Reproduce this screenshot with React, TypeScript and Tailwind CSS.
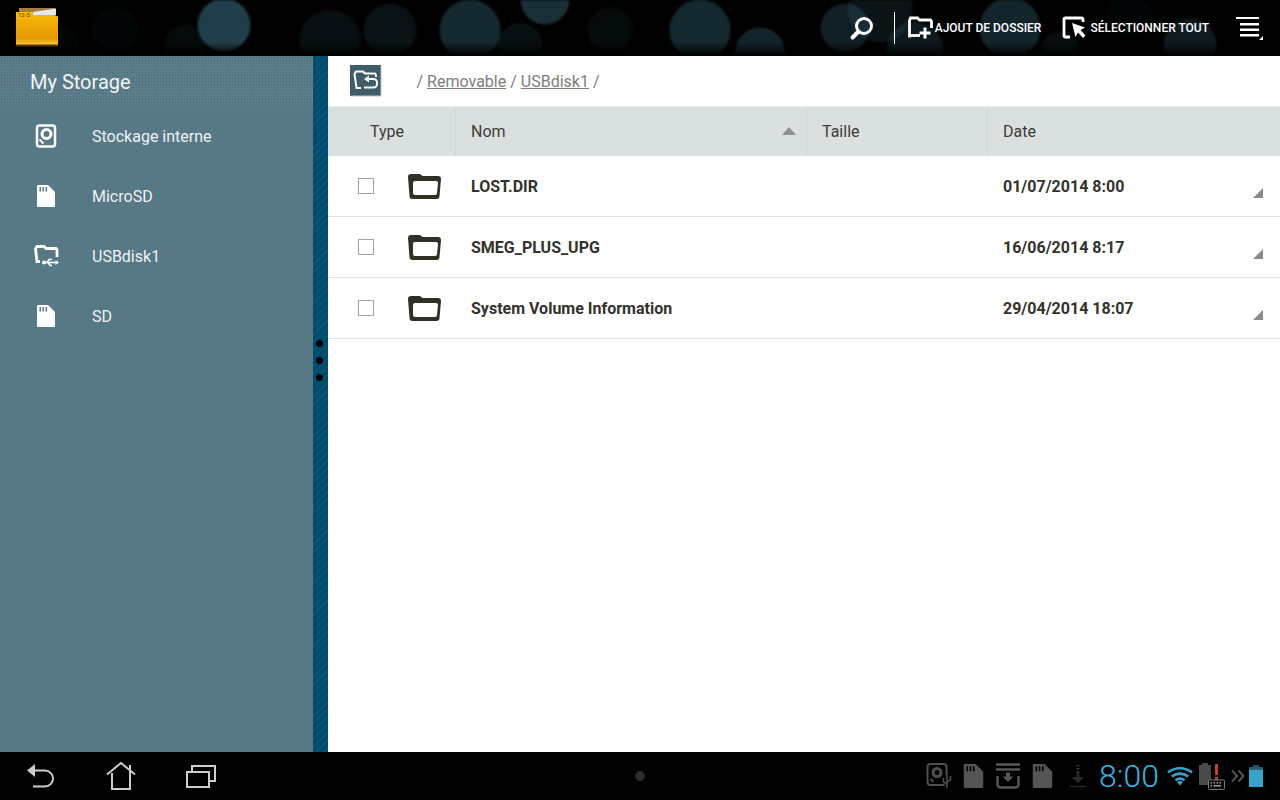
import type { ReactNode } from 'react'

const bokeh = [
  { x: 224, y: 25, r: 26, o: 0.5 },
  { x: 115, y: 30, r: 22, o: 0.05 },
  { x: 60, y: 45, r: 18, o: 0.04 },
  { x: 185, y: 45, r: 20, o: 0.08 },
  { x: 330, y: 40, r: 30, o: 0.12 },
  { x: 390, y: 30, r: 26, o: 0.14 },
  { x: 470, y: 30, r: 30, o: 0.32 },
  { x: 545, y: 0, r: 24, o: 0.38 },
  { x: 520, y: 45, r: 22, o: 0.12 },
  { x: 610, y: 30, r: 22, o: 0.08 },
  { x: 700, y: 30, r: 30, o: 0.32 },
  { x: 760, y: 52, r: 24, o: 0.3 },
  { x: 845, y: 28, r: 24, o: 0.25 },
  { x: 880, y: 10, r: 32, o: 0.16 },
  { x: 915, y: 50, r: 28, o: 0.2 },
  { x: 1010, y: 28, r: 30, o: 0.3 },
  { x: 1060, y: 50, r: 18, o: 0.12 },
  { x: 1190, y: 45, r: 26, o: 0.22 },
  { x: 1130, y: 15, r: 22, o: 0.04 },
]

function AppFolder() {
  return (
    <svg width="44" height="40" viewBox="0 0 44 40">
      <defs>
        <linearGradient id="appfolder" x1="0" y1="0" x2="0" y2="1">
          <stop offset="0" stopColor="#f7bb0c" />
          <stop offset="0.8" stopColor="#e59a00" />
          <stop offset="0.93" stopColor="#f5b520" />
          <stop offset="1" stopColor="#fbd050" />
        </linearGradient>
      </defs>
      <path d="M4 1h36v12H4z" fill="#a87c45" />
      <path d="M18 5l23-3.500v7H18z" fill="#e8e8e8" />
      <path d="M1 5h16l2 4h23a1 1 0 0 1 1 1v28H1z" fill="url(#appfolder)" />
      <path d="M1 37.500h42v2H1z" fill="#5a2c05" />
      <text x="3" y="10" fontSize="6" fill="#5a3a00" fontFamily="Roboto, sans-serif">12-5</text>
    </svg>
  )
}

function SearchIcon() {
  return (
    <svg width="26" height="26" viewBox="0 0 26 26" fill="none" stroke="#fff">
      <circle cx="15" cy="11" r="7.5" strokeWidth="3" />
      <path d="M9.5 16.5L3.5 22.5" strokeWidth="4" strokeLinecap="round" />
    </svg>
  )
}

function FolderPlusIcon() {
  return (
    <svg width="26" height="26" viewBox="0 0 26 26" fill="none">
      <path d="M4 21H2.500V5.500L3.500 3h7l2 2h11l1 1.500V13" stroke="#fff" strokeWidth="2.800" />
      <path d="M3 20.500h10" stroke="#fff" strokeWidth="2.800" />
      <path d="M18 12.500v11M12.500 18h11" stroke="#fff" strokeWidth="3" />
    </svg>
  )
}

function SelectAllIcon() {
  return (
    <svg width="26" height="24" viewBox="0 0 26 24" fill="none">
      <path d="M8 21H3.500a1.500 1.500 0 0 1-1.500-1.500V3.500A1.500 1.500 0 0 1 3.500 2h16a1.500 1.500 0 0 1 1.500 1.500V6" stroke="#fff" strokeWidth="2.800" />
      <path d="M10 7l13 4.500-4.500 2.500 5 5.500-2.500 2.500-5-5.500-2.500 4.500z" fill="#fff" />
    </svg>
  )
}

function MenuIcon() {
  return (
    <svg width="28" height="26" viewBox="0 0 28 26" fill="#fff">
      <path d="M0 2h23v2H0zM4 8h19v2.500H4zM4 13.500h19V16H4zM4 19h19v2.500H4z" />
      <path d="M27 21v4h-4z" />
    </svg>
  )
}

function DiskIcon() {
  return (
    <svg width="24" height="24" viewBox="0 0 24 24" fill="none">
      <rect x="3" y="1.500" width="18" height="21" rx="2.500" stroke="#fff" strokeWidth="2.500" />
      <circle cx="12.500" cy="10" r="4.500" stroke="#fff" strokeWidth="3" />
      <path d="M5.500 15.500l4 4" stroke="#fff" strokeWidth="2" />
    </svg>
  )
}

function SdIcon({ color = '#fff', notch = '#577885', w = 20, h = 24 }: { color?: string; notch?: string; w?: number; h?: number }) {
  return (
    <svg width={w} height={h} viewBox="0 0 20 24">
      <path d="M1 2a1 1 0 0 1 1-1h10l7 7v14a1 1 0 0 1-1 1H2a1 1 0 0 1-1-1z" fill={color} />
      <path d="M3.500 3h1.500v4.500H3.500zM6.500 3h1.500v4.500H6.500zM9.500 3h1.500v4.500H9.500z" fill={notch} />
    </svg>
  )
}

function UsbFolderIcon() {
  return (
    <svg width="26" height="24" viewBox="0 0 26 24" fill="none">
      <path d="M6 17.500H3L1.500 5l1.500-2.500h7l2 2h10l1 1.500v7" stroke="#fff" strokeWidth="2.800" />
      <path d="M9 18.500h15" stroke="#fff" strokeWidth="1.700" />
      <path d="M25 18.500l-3.500-2.500v5z" fill="#fff" />
      <circle cx="10" cy="18.500" r="2" fill="#fff" />
      <path d="M13 18.500l2-3h3M14 18.500l2 3h2" stroke="#fff" strokeWidth="1.400" />
    </svg>
  )
}

function BackFolderIcon() {
  return (
    <svg width="32" height="32" viewBox="0 0 32 32">
      <rect width="31" height="31" fill="#3f5d68" />
      <path d="M31 1v30H1" fill="none" stroke="#b9c4c6" strokeWidth="1" />
      <path d="M11 23H6.500L4.500 9l1.500-2.500h7l2 2h10l1 1.500v2" fill="none" stroke="#fff" strokeWidth="2" />
      <path d="M18 14h5.500a3.500 3.500 0 0 1 3.500 3.500v1.500a3.500 3.500 0 0 1-3.500 3.500H14" fill="none" stroke="#fff" strokeWidth="2" />
      <path d="M14 14l5-3.500v7z" fill="#fff" />
    </svg>
  )
}

function RowFolderIcon() {
  return (
    <svg width="33" height="25" viewBox="0 0 33 25">
      <path d="M0 3a3 3 0 0 1 3-3h9l2.500 2h15.500a3 3 0 0 1 3 3l-1.500 17a3 3 0 0 1-3 3H4.500a3 3 0 0 1-3-3z" fill="#322f24" />
      <path d="M5 9a2 2 0 0 1 2-2h21a2 2 0 0 1 2 2l-1 10a2 2 0 0 1-2 2H7a2 2 0 0 1-2-2z" fill="#fff" />
    </svg>
  )
}

function BackNavIcon() {
  return (
    <svg width="28" height="26" viewBox="0 0 28 26" fill="none">
      <path d="M1 7.500L9 1v13z" fill="#c9cfca" />
      <path d="M8 7.500h11a7.500 7.500 0 0 1 0 16H7" stroke="#c9cfca" strokeWidth="2" />
    </svg>
  )
}

function HomeNavIcon() {
  return (
    <svg width="30" height="28" viewBox="0 0 30 28" fill="none" stroke="#c9cfca" strokeWidth="2">
      <path d="M1 12.500L15 1l14 11.500" />
      <path d="M6 11v16h18V11" />
      <path d="M24 3v8" />
    </svg>
  )
}

function RecentNavIcon() {
  return (
    <svg width="30" height="24" viewBox="0 0 30 24" fill="none" stroke="#c9cfca" strokeWidth="2">
      <rect x="1" y="8" width="22" height="15" />
      <path d="M6 8V2h23v15h-6" />
    </svg>
  )
}

function UsbDiskStatusIcon() {
  return (
    <svg width="27" height="28" viewBox="0 0 27 28" fill="none">
      <rect x="1.500" y="2" width="19" height="21" rx="3" stroke="#4f4f4f" strokeWidth="2" />
      <circle cx="11" cy="10.500" r="4" stroke="#4f4f4f" strokeWidth="3" />
      <path d="M4.500 17l3 3" stroke="#4f4f4f" strokeWidth="2" />
      <path d="M21 12v14M17.500 16v4l3.500 2M24.500 14v4l-3.500 2" stroke="#000" strokeWidth="3.500" />
      <path d="M21 11v15M17.500 16v4l3.500 2M24.500 14v4l-3.500 2" stroke="#4f4f4f" strokeWidth="1.500" />
    </svg>
  )
}

function TrayStatusIcon() {
  return (
    <svg width="24" height="26" viewBox="0 0 24 26" fill="none">
      <path d="M0 1.500h24M0 6.500h24" stroke="#555" strokeWidth="2.500" />
      <path d="M10 9.500h4v4h3.500L12 19l-5.500-5.500H10z" fill="#555" />
      <path d="M1.500 13v8.500a3 3 0 0 0 3 3h15a3 3 0 0 0 3-3V13" stroke="#555" strokeWidth="2.500" />
    </svg>
  )
}

function DownloadStatusIcon() {
  return (
    <svg width="16" height="24" viewBox="0 0 16 24" fill="none">
      <path d="M6.500 1h3v1.500h-3zM6.500 4h3v1.500h-3z" fill="#333" />
      <path d="M6.500 7h3v6H14l-6 6-6-6h4.500z" fill="#2b2b2b" />
      <path d="M0 22.500h16" stroke="#262626" strokeWidth="1.500" />
    </svg>
  )
}

function WifiIcon() {
  return (
    <svg width="26" height="20" viewBox="0 0 26 20" fill="none" stroke="#33a5cd" strokeWidth="2.600">
      <path d="M1 6.500C8 .8 18 .8 25 6.500" />
      <path d="M4.800 10.500c4.800-3.800 11.600-3.800 16.400 0" />
      <path d="M8.500 14.200c2.800-2 6.200-2 9 0" />
      <path d="M13 19.500l-3-3.500c1.800-1.200 4.200-1.200 6 0z" fill="#33a5cd" stroke="none" />
    </svg>
  )
}

function KeyboardBatteryIcon() {
  return (
    <svg width="26" height="28" viewBox="0 0 26 28">
      <path d="M3 1h6v2h3v20H0V3h3z" fill="#4a4a4a" />
      <path d="M16 2h3v11h-3zM16 15h3v3h-3z" fill="#c8401f" />
      <rect x="9.500" y="18" width="16" height="9.500" rx="1" fill="#0a0a0a" stroke="#777" />
      <path d="M11.500 20h1.500v1.500h-1.500zM14.500 20h1.500v1.500h-1.500zM17.500 20h1.500v1.500h-1.500zM20.500 20h1.500v1.500h-1.500zM11.500 23h1.500v1.500h-1.500zM14.500 23h7.500v1.500h-7.500z" fill="#999" />
    </svg>
  )
}

function ChevronsIcon() {
  return (
    <svg width="14" height="14" viewBox="0 0 14 14" fill="none" stroke="#555" strokeWidth="2">
      <path d="M1 1.500L6 7l-5 5.500M7.500 1.500L12.500 7l-5 5.500" />
    </svg>
  )
}

function BatteryIcon() {
  return (
    <svg width="14" height="22" viewBox="0 0 14 22">
      <path d="M4 0h6v2H4z" fill="#33a5cd" opacity="0.5" />
      <path d="M0 2h14v3H0z" fill="#2f5f70" />
      <path d="M0 5h14v17H0z" fill="#33a5cd" />
    </svg>
  )
}

const drives: { label: string; icon: ReactNode }[] = [
  { label: 'Stockage interne', icon: <DiskIcon /> },
  { label: 'MicroSD', icon: <div className="ml-[2px]"><SdIcon /></div> },
  { label: 'USBdisk1', icon: <UsbFolderIcon /> },
  { label: 'SD', icon: <div className="ml-[2px]"><SdIcon /></div> },
]

const files = [
  { name: 'LOST.DIR', date: '01/07/2014 8:00' },
  { name: 'SMEG_PLUS_UPG', date: '16/06/2014 8:17' },
  { name: 'System Volume Information', date: '29/04/2014 18:07' },
]

export default function App() {
  return (
    <div className="w-[1280px] h-[800px] overflow-hidden flex flex-col bg-white font-['Roboto',sans-serif]">
      {/* Action bar */}
      <header className="relative h-[56px] shrink-0 bg-black flex items-center overflow-hidden">
        <svg className="absolute inset-0 blur-[1px]" width="1280" height="56">
          {bokeh.map((b, i) => (
            <circle key={i} cx={b.x} cy={b.y} r={b.r} fill="#3f7c92" fillOpacity={b.o} stroke="#6fa5b8" strokeOpacity={b.o * 0.4} />
          ))}
        </svg>
        <div className="absolute left-0 right-0 bottom-0 h-[14px] bg-gradient-to-b from-transparent to-black" />
        <div className="relative ml-[15px] mt-[-2px]">
          <AppFolder />
        </div>
        <div className="relative ml-auto flex items-center text-white">
          <SearchIcon />
          <div className="w-px h-[32px] bg-white ml-[19px] mr-[12px]" />
          <div className="flex items-center gap-[2px]">
            <FolderPlusIcon />
            <span className="text-[12px] font-medium">AJOUT DE DOSSIER</span>
          </div>
          <div className="flex items-center gap-[2px] ml-[21px]">
            <SelectAllIcon />
            <span className="text-[12px] font-medium">SÉLECTIONNER TOUT</span>
          </div>
          <div className="ml-[27px] mr-[16px]">
            <MenuIcon />
          </div>
        </div>
      </header>

      <div className="flex-1 flex min-h-0">
        {/* Drive list */}
        <aside className="w-[313px] shrink-0 bg-[#577885] text-white">
          <div className="h-[50px] pl-[30px] pt-[2px] flex items-center text-[20px] text-[#f2f5f5] bg-[#5b7c89] bg-[radial-gradient(#4a6b78_0.7px,transparent_0.8px)] bg-[length:3px_3px]">
            My Storage
          </div>
          {drives.map(d => (
            <div key={d.label} className="h-[60px] flex items-center text-[16px] text-[#eef2f3]">
              <div className="w-[92px] pl-[34px] flex">
                {d.icon}
              </div>
              <span className="pt-[2px]">{d.label}</span>
            </div>
          ))}
        </aside>

        {/* Splitter */}
        <div className="w-[15px] shrink-0 flex flex-col items-center pr-[2px] pt-[284px] gap-[10px] bg-[repeating-linear-gradient(135deg,#004b6b_0px,#004b6b_4px,#06567a_4px,#06567a_5.500px)]">
          <div className="w-[7px] h-[7px] rounded-full bg-black" />
          <div className="w-[7px] h-[7px] rounded-full bg-black" />
          <div className="w-[7px] h-[7px] rounded-full bg-black" />
        </div>

        {/* File list */}
        <main className="flex-1 min-w-0 flex flex-col bg-white">
          <div className="h-[50px] shrink-0 flex items-center pl-[22px] text-[16px] text-[#7d7d7d]">
            <BackFolderIcon />
            <div className="ml-[34.500px] pt-[2px] flex gap-[4px]">
              <span>/</span>
              <span className="underline">Removable</span>
              <span>/</span>
              <span className="underline">USBdisk1</span>
              <span>/</span>
            </div>
          </div>
          <div className="h-[50px] shrink-0 flex bg-[#dae0e0] text-[16px] text-[#3c3c38] border-t border-[#e8ecec]">
            <div className="w-[128px] pl-[42px] flex items-center border-r border-[#d0d5d5]">Type</div>
            <div className="w-[351px] pl-[15px] pr-[10px] flex items-center justify-between border-r border-[#d0d5d5]">
              <span>Nom</span>
              <span className="w-0 h-0 border-x-[7px] border-x-transparent border-b-[8px] border-b-[#8f918a] mb-[2px]" />
            </div>
            <div className="w-[181px] pl-[15px] flex items-center border-r border-[#d0d5d5]">Taille</div>
            <div className="flex-1 pl-[15px] flex items-center">Date</div>
          </div>
          {files.map(f => (
            <div key={f.name} className="h-[61px] shrink-0 flex items-center border-b border-[#e2e4e4] text-[16px] font-bold text-[#33322c]">
              <div className="w-[128px] flex items-center pl-[30px]">
                <div className="w-4 h-4 border border-[#a3a3a3] bg-white" />
                <div className="ml-[34px] flex">
                  <RowFolderIcon />
                </div>
              </div>
              <div className="w-[532px] pl-[15px] pt-[2px]">{f.name}</div>
              <div className="flex-1 pl-[15px] pt-[2px]">{f.date}</div>
              <div className="self-end mb-[18px] mr-[17px] w-0 h-0 border-l-[10px] border-l-transparent border-b-[10px] border-b-[#8a8a8a]" />
            </div>
          ))}
        </main>
      </div>

      {/* System bar */}
      <footer className="relative h-[48px] shrink-0 bg-black flex items-center">
        <div className="flex items-center ml-[26px]">
          <BackNavIcon />
          <div className="ml-[52px]">
            <HomeNavIcon />
          </div>
          <div className="ml-[50px]">
            <RecentNavIcon />
          </div>
        </div>
        <div className="absolute left-[635px] top-[19px] w-[10px] h-[10px] rounded-full bg-[#2c2c2c]" />
        <div className="ml-auto flex items-center mr-[17px]">
          <UsbDiskStatusIcon />
          <div className="ml-[9px] flex">
            <SdIcon color="#555" notch="#000" w={23} h={26} />
          </div>
          <div className="ml-[11px]">
            <TrayStatusIcon />
          </div>
          <div className="ml-[11px] flex">
            <SdIcon color="#555" notch="#000" w={23} h={26} />
          </div>
          <div className="ml-[16px]">
            <DownloadStatusIcon />
          </div>
          <span className="ml-[13px] text-[32px] font-light text-[#33b5e5] leading-none">8:00</span>
          <div className="ml-[8px]">
            <WifiIcon />
          </div>
          <div className="ml-[6px]">
            <KeyboardBatteryIcon />
          </div>
          <div className="ml-[6px]">
            <ChevronsIcon />
          </div>
          <div className="ml-[4px]">
            <BatteryIcon />
          </div>
        </div>
      </footer>
    </div>
  )
}
